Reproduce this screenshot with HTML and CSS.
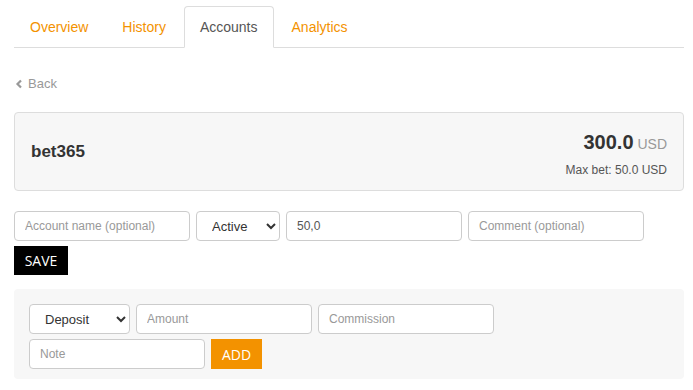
FILE: index.html
```html
<!DOCTYPE html>
<html lang="en">

<head>
  <meta charset="UTF-8">
  <meta name="viewport" content="width=device-width, initial-scale=1.0">
  <title>Accounts - bet365</title>
  <link rel="stylesheet" href="styles.css">
</head>

<body>
  <div id="page">
    <ul class="tabs">
      <li><a href="#">Overview</a></li>
      <li><a href="#">History</a></li>
      <li class="active"><a href="#">Accounts</a></li>
      <li><a href="#">Analytics</a></li>
    </ul>

    <a class="back" href="#">
      <svg width="8" height="10" viewBox="0 0 8 10"><path d="M6 1.5 L2.5 5 L6 8.5" fill="none" stroke="#999" stroke-width="2.2"/></svg>
      Back
    </a>

    <div class="account-card">
      <div class="account-name">bet365</div>
      <div class="account-balance">
        <div class="balance"><strong>300.0</strong> <span class="currency">USD</span></div>
        <div class="max-bet">Max bet: 50.0 USD</div>
      </div>
    </div>

    <form class="account-form" onsubmit="return false;">
      <div class="row">
        <input type="text" class="field" placeholder="Account name (optional)">
        <select class="field select-status">
          <option>Active</option>
          <option>Inactive</option>
        </select>
        <input type="text" class="field" value="50,0">
        <input type="text" class="field" placeholder="Comment (optional)">
      </div>
      <button type="submit" class="btn btn-save">SAVE</button>
    </form>

    <form class="transaction-panel" onsubmit="return false;">
      <div class="row">
        <select class="field select-type">
          <option>Deposit</option>
          <option>Withdraw</option>
        </select>
        <input type="text" class="field" placeholder="Amount">
        <input type="text" class="field" placeholder="Commission">
      </div>
      <div class="row">
        <input type="text" class="field" placeholder="Note">
        <button type="submit" class="btn btn-add">ADD</button>
      </div>
    </form>
  </div>
</body>

</html>
```

FILE: styles.css
```css
body {
  margin: 0;
  background-color: #fff;
  color: #333;
  font-family: 'Liberation Sans', Arial, sans-serif;
  font-size: 14px;
}

#page {
  padding: 6px 9px 0 14px;
}

.tabs {
  display: flex;
  list-style: none;
  margin: 0;
  padding: 0;
  border-bottom: 1px solid #ddd;
}

.tabs li {
  margin-right: 2px;
  margin-bottom: -1px;
}

.tabs a {
  display: block;
  padding: 10px 15px;
  line-height: 20px;
  border: 1px solid transparent;
  border-radius: 4px 4px 0 0;
  color: #f39200;
  text-decoration: none;
}

.tabs .active a {
  color: #555;
  background-color: #fff;
  border-color: #ddd #ddd transparent;
}

.back {
  display: flex;
  align-items: center;
  gap: 5px;
  margin-top: 26px;
  line-height: 20px;
  font-size: 13px;
  color: #999;
  text-decoration: none;
}

.back svg {
  margin-left: 1px;
}

.account-card {
  display: flex;
  align-items: center;
  justify-content: space-between;
  margin-top: 18px;
  padding: 16px 16px 12px 16px;
  background-color: #f7f7f7;
  border: 1px solid #ddd;
  border-radius: 4px;
}

.account-name {
  margin-top: -3px;
  font-size: 17px;
  font-weight: bold;
  color: #333;
}

.account-balance {
  text-align: right;
}

.balance {
  line-height: 26px;
}

.balance strong {
  font-size: 20px;
  color: #333;
}

.currency {
  font-size: 14px;
  color: #999;
}

.max-bet {
  margin-top: 5px;
  font-size: 12px;
  line-height: 16px;
  color: #555;
}

.account-form {
  margin-top: 20px;
}

.row {
  display: flex;
  gap: 6px;
}

.field {
  box-sizing: border-box;
  width: 176px;
  height: 30px;
  padding: 5px 10px;
  font-family: 'Liberation Sans', Arial, sans-serif;
  font-size: 12px;
  color: #555;
  background-color: #fff;
  border: 1px solid #ccc;
  border-radius: 4px;
}

.field::placeholder {
  color: #999;
}

select.field {
  padding: 5px 6px 5px 11px;
  font-size: 13px;
  color: #333;
}

.select-status {
  width: 84px;
}

.select-type {
  width: 101px;
}

.btn {
  height: 29px;
  border: none;
  border-radius: 0;
  color: #fff;
  font-family: 'Open Sans', sans-serif;
  font-size: 14px;
  font-weight: 500;
  cursor: pointer;
}

.btn-save {
  display: block;
  width: 54px;
  margin-top: 5px;
  background-color: #000;
}

.btn-add {
  width: 51px;
  height: 30px;
  background-color: #f39200;
}

.transaction-panel {
  display: flex;
  flex-direction: column;
  gap: 5px;
  margin-top: 14px;
  padding: 15px 15px 10px 15px;
  background-color: #f7f7f7;
  border-radius: 4px;
}
```
